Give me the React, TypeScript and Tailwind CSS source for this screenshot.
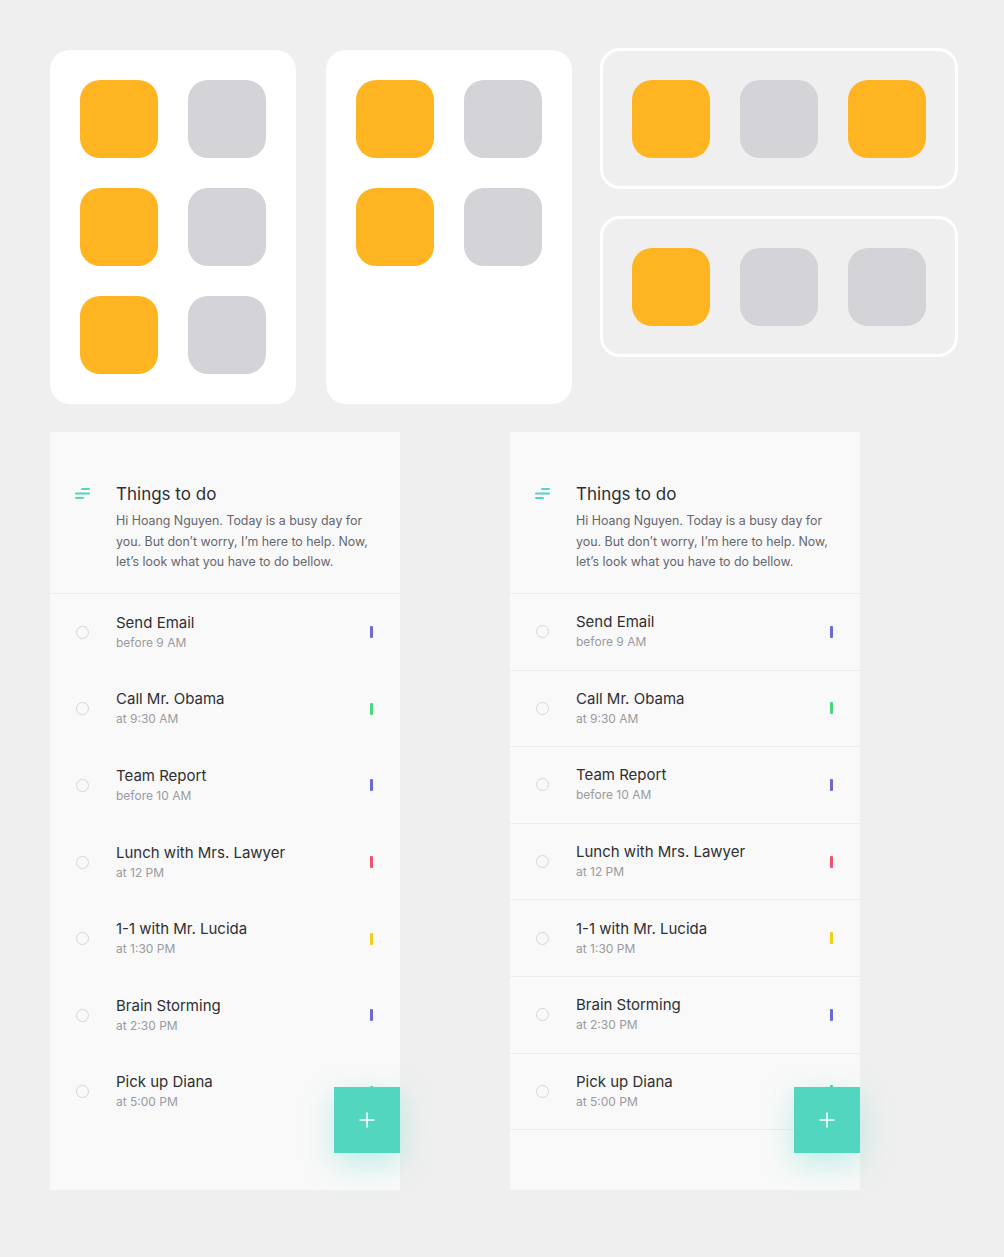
import React from "react";

type Task = { title: string; time: string; color: string };

const tasks: Task[] = [
  { title: "Send Email", time: "before 9 AM", color: "bg-[#6b6bd6]" },
  { title: "Call Mr. Obama", time: "at 9:30 AM", color: "bg-[#4cd480]" },
  { title: "Team Report", time: "before 10 AM", color: "bg-[#6b6bd6]" },
  { title: "Lunch with Mrs. Lawyer", time: "at 12 PM", color: "bg-[#f2506e]" },
  { title: "1-1 with Mr. Lucida", time: "at 1:30 PM", color: "bg-[#f5cd19]" },
  { title: "Brain Storming", time: "at 2:30 PM", color: "bg-[#6b6bd6]" },
  { title: "Pick up Diana", time: "at 5:00 PM", color: "bg-[#4cd480]" },
];

const Tile = ({ on }: { on: boolean }) => (
  <div
    className={`w-[78px] h-[78px] rounded-[20px] ${
      on ? "bg-[#ffb422]" : "bg-[#d3d3d8]"
    }`}
  />
);

const MenuIcon = () => (
  <svg width="16" height="13" viewBox="0 0 16 13" className="shrink-0">
    <rect x="6" y="1" width="9" height="2" rx="1" fill="#52d6c0" />
    <rect x="0" y="5.5" width="15" height="2" rx="1" fill="#52d6c0" />
    <rect x="0" y="10" width="9" height="2" rx="1" fill="#52d6c0" />
  </svg>
);

const TodoPanel = ({ dividers }: { dividers: boolean }) => (
  <div className="relative w-[350px] h-[758px] bg-[#f9f9f9] font-['Inter',sans-serif]">
    {/* Encabezado */}
    <div className="h-[162px] flex pt-[50px] border-b border-[#ededed]">
      <div className="w-[66px] pl-[25px] pt-[5px]">
        <MenuIcon />
      </div>
      <div className="flex-1 pr-[30px]">
        <div className="text-[17px] leading-[24px] text-[#2f2f33]">Things to do</div>
        <p className="mt-[5px] text-[12.4px] leading-[20.5px] text-[#66666f]">
          Hi Hoang Nguyen. Today is a busy day for you. But don’t worry, I’m here to help. Now, let’s look what you have to do bellow.
        </p>
      </div>
    </div>

    {/* Tareas */}
    {tasks.map((t) => (
      <div
        key={t.title}
        className={`h-[76.6px] flex items-center ${
          dividers ? "border-b border-[#ededed]" : ""
        }`}
      >
        <div className="w-[66px] pl-[26px]">
          <div className="w-[13px] h-[13px] rounded-full border border-[#d6d6d6]" />
        </div>
        <div className="flex-1 -mt-[1px]">
          <div className="text-[15px] leading-[20px] text-[#2f2f33]">{t.title}</div>
          <div className="mt-[1px] text-[12px] leading-[17px] text-[#9a9aa0]">{t.time}</div>
        </div>
        <div className={`w-[3px] h-[12px] rounded-[1px] mr-[27px] ${t.color}`} />
      </div>
    ))}

    {/* Botón */}
    <button className="absolute right-0 top-[655px] w-[66px] h-[66px] bg-[#52d6c0] flex items-center justify-center shadow-[0_10px_30px_rgba(82,214,192,0.35)]">
      <svg width="18" height="18" viewBox="0 0 18 18">
        <path d="M9 1.5v15M1.5 9h15" stroke="#fff" strokeWidth="1.6" />
      </svg>
    </button>
  </div>
);

export default function App() {
  return (
    <div className="min-h-[1257px] bg-[#efefef] pl-[50px] pt-[48px]">
      {/* Tarjetas */}
      <div className="flex items-start">
        <div className="mt-[2px] w-[246px] h-[354px] bg-white rounded-[20px] p-[30px] grid grid-cols-2 gap-[30px] content-start">
          <Tile on />
          <Tile on={false} />
          <Tile on />
          <Tile on={false} />
          <Tile on />
          <Tile on={false} />
        </div>
        <div className="mt-[2px] ml-[30px] w-[246px] h-[354px] bg-white rounded-[20px] p-[30px] grid grid-cols-2 gap-[30px] content-start">
          <Tile on />
          <Tile on={false} />
          <Tile on />
          <Tile on={false} />
        </div>
        <div className="ml-[28px] flex flex-col gap-[27px]">
          <div className="w-[358px] h-[141px] border-[3px] border-white rounded-[20px] px-[29px] pt-[29px] flex items-start gap-[30px]">
            <Tile on />
            <Tile on={false} />
            <Tile on />
          </div>
          <div className="w-[358px] h-[141px] border-[3px] border-white rounded-[20px] px-[29px] pt-[29px] flex items-start gap-[30px]">
            <Tile on />
            <Tile on={false} />
            <Tile on={false} />
          </div>
        </div>
      </div>

      {/* Listas */}
      <div className="mt-[28px] flex gap-[110px]">
        <TodoPanel dividers={false} />
        <TodoPanel dividers />
      </div>
    </div>
  );
}
